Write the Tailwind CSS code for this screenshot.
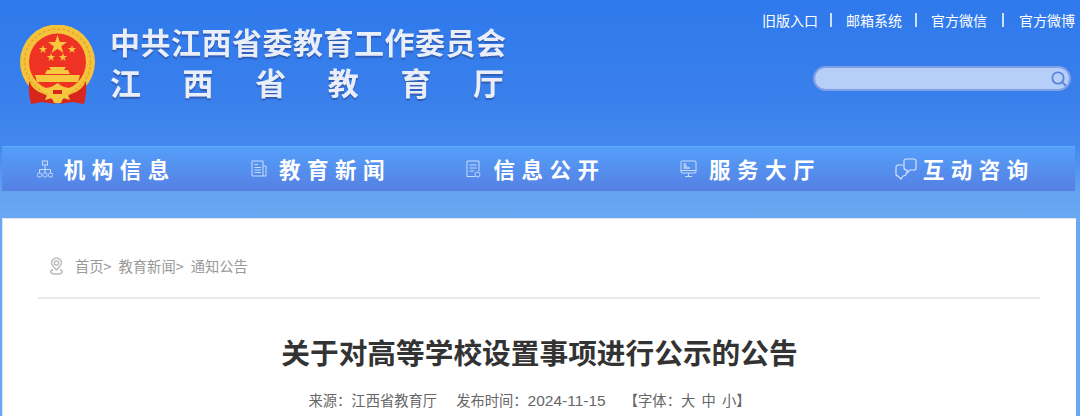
<!DOCTYPE html>
<html lang="zh-CN">
<head>
<meta charset="utf-8">
<script src="https://cdn.jsdelivr.net/npm/@tailwindcss/browser@4"></script>
</head>
<body class="m-0 h-[416px] w-[1080px] overflow-hidden bg-[#6aa8f2] font-['Noto_Sans_CJK_SC','Liberation_Sans',sans-serif]">
<div class="flex h-[416px] flex-col bg-[linear-gradient(180deg,#2e79ec_0px,#3a80ec_100px,#4388ee_146px,#62a2ef_191px,#6aa8f2_218px)]">
  <header class="flex h-[146px] shrink-0 justify-between">
    <div class="flex pl-[20px] pt-[25px]">
      <svg class="blur-[0.5px]" width="75" height="80" viewBox="0 0 75 80">
        <circle cx="37.5" cy="37" r="37.5" fill="#f5c33b"/>
        <circle cx="37.5" cy="37" r="33" fill="none" stroke="#e6a62a" stroke-width="1.5" stroke-dasharray="3 2"/>
        <circle cx="37.5" cy="37" r="28.5" fill="#ee3324"/>
        <polygon fill="#f6c83e" points="37.5,10 39.8,17 47,17 41.2,21.2 43.4,28 37.5,23.8 31.6,28 33.8,21.2 28,17 35.2,17"/>
        <polygon fill="#f6c83e" points="23,20 24,23 27.2,23 24.6,24.9 25.6,28 23,26.1 20.4,28 21.4,24.9 18.8,23 22,23"/>
        <polygon fill="#f6c83e" points="52,20 53,23 56.2,23 53.6,24.9 54.6,28 52,26.1 49.4,28 50.4,24.9 47.8,23 51,23"/>
        <polygon fill="#f6c83e" points="31,28 32,31 35.2,31 32.6,32.9 33.6,36 31,34.1 28.4,36 29.4,32.9 26.8,31 30,31"/>
        <polygon fill="#f6c83e" points="43,28 44,31 47.2,31 44.6,32.9 45.6,36 43,34.1 40.4,36 41.4,32.9 38.8,31 42,31"/>
        <path d="M29 42 H46 L44 45 H48 L50 49 H25 L27 45 H31 Z" fill="#f6c83e"/>
        <path d="M15 50 H60 L58 57 H17 Z" fill="#f6c83e"/>
        <path d="M9 56 Q13 66 24 69 L31 73 L36 79 L22 77 L11 79 Q8 68 9 56 Z M66 56 Q62 66 51 69 L44 73 L39 79 L53 77 L64 79 Q67 68 66 56 Z" fill="#d8261c"/>
        <path d="M21 62 Q29 65 37.5 58 Q46 65 54 62 Q53 69 47 68 L50 75 L43 73 L41 78 H34 L32 73 L25 75 L28 68 Q22 69 21 62 Z" fill="#f6c83e"/>
        <path d="M33 65 H42 V69 H33 Z" fill="#d8261c"/>
      </svg>
      <div class="ml-[15px] flex w-[396px] flex-col font-bold text-[#e9eef9] blur-[0.4px] [text-shadow:0_2px_1px_rgba(40,60,130,0.5)]">
        <div class="mt-[-3px] flex h-[37px] items-center justify-between text-[30px] leading-none">
          <span>中</span><span>共</span><span>江</span><span>西</span><span>省</span><span>委</span><span>教</span><span>育</span><span>工</span><span>作</span><span>委</span><span>员</span><span>会</span>
        </div>
        <div class="mt-[2px] flex h-[40px] items-center justify-between pr-[2px] text-[31px] leading-none">
          <span>江</span><span>西</span><span>省</span><span>教</span><span>育</span><span>厅</span>
        </div>
      </div>
    </div>
    <div class="flex flex-col items-end">
      <nav class="flex h-[39px] items-center text-[14px] leading-none text-white">
        <a>旧版入口</a><span class="ml-[12px] mr-[14px] h-[14px] w-[2px] bg-[#cfe0fb]"></span>
        <a>邮箱系统</a><span class="ml-[13px] mr-[14px] h-[14px] w-[2px] bg-[#cfe0fb]"></span>
        <a>官方微信</a><span class="mx-[15px] h-[14px] w-[2px] bg-[#cfe0fb]"></span>
        <a class="pr-[5px]">官方微博</a>
      </nav>
      <div class="mr-[9px] mt-[27px] flex h-[25px] w-[258px] items-center justify-end rounded-full border-2 border-[#7f9fe6] bg-[#b6cff8] pr-[1px]">
        <svg width="18" height="18" viewBox="0 0 18 18" fill="none" stroke="#5c82e0" stroke-width="1.8"><circle cx="8" cy="8" r="5.7"/><path d="M12.2 12.2 L16 16"/></svg>
      </div>
    </div>
  </header>

  <nav class="ml-[2px] mr-[5px] grid h-[45px] shrink-0 grid-cols-5 border-t border-[#63aafb] bg-[linear-gradient(180deg,#559ffa,#5580e3)] pb-[1px] text-[21.5px] font-bold leading-none text-white">
    <a class="flex items-center justify-center pr-[6px]">
      <svg class="mr-[11px]" width="16" height="18" viewBox="0 0 16 18" fill="none" stroke="#c9dcfa" stroke-width="1"><rect x="5.5" y="1" width="5" height="4"/><path d="M8 5 V9 M2.5 13 V9.5 H13.5 V13 M8 9.5 V13"/><rect x="0.5" y="13" width="4" height="4" rx="1.5"/><rect x="6" y="13" width="4" height="4" rx="1.5"/><rect x="11.5" y="13" width="4" height="4" rx="1.5"/></svg>
      <span class="tracking-[6.5px]">机构信息</span>
    </a>
    <a class="flex items-center justify-center pr-[6px]">
      <svg class="mr-[12px]" width="16" height="17" viewBox="0 0 16 17" fill="none" stroke="#c9dcfa" stroke-width="1"><path d="M1 1 H12 V16 H1 Z M12 6 H15 V16 H12"/><path d="M3.5 4.5 H7 M3.5 7.5 H10 M3.5 10 H10 M3.5 12.5 H10"/></svg>
      <span class="tracking-[6.5px]">教育新闻</span>
    </a>
    <a class="flex items-center justify-center pr-[5px]">
      <svg class="mr-[12px]" width="15" height="18" viewBox="0 0 15 18" fill="none" stroke="#c9dcfa" stroke-width="1"><path d="M9 16.5 H1 V1 H13 V11"/><path d="M3.5 5 H10.5 M3.5 8 H10.5 M3.5 11 H8"/><circle cx="11.5" cy="14.5" r="2.5"/></svg>
      <span class="tracking-[6.5px]">信息公开</span>
    </a>
    <a class="flex items-center justify-center pr-[5px]">
      <svg class="mr-[12px]" width="17" height="18" viewBox="0 0 17 18" fill="none" stroke="#c9dcfa" stroke-width="1"><rect x="1" y="1" width="15" height="12" rx="1"/><path d="M1 10.5 H16 M8.5 13 V16.5 M5 16.5 H12"/><path d="M3.5 4 H6 M3.5 6 H7 M3.5 8 H10" stroke-width="1.4"/></svg>
      <span class="tracking-[6.5px]">服务大厅</span>
    </a>
    <a class="flex items-center justify-center pr-[6px]">
      <svg class="mr-[6px]" width="22" height="22" viewBox="0 0 22 22" fill="none" stroke="#d5e3fb" stroke-width="1.2"><path d="M9 2.5 Q9 1 11 1 H19 Q21 1 21 3 V10 Q21 12 19 12 H15 L12 15 V12 Q9 12 9 10 Z"/><path d="M8 7 H3.5 Q1 7 1 9.5 V16 Q1 18 3 18 L6 21 L8 18 Q11 18 11.5 15"/></svg>
      <span class="tracking-[6.5px]">互动咨询</span>
    </a>
  </nav>

  <div class="h-[27px] shrink-0"></div>

  <main class="ml-[2px] mr-[4px] flex-1 border-l border-t border-[#dfe6f0] bg-white">
    <div class="ml-[35px] mr-[36px] flex h-[80px] items-center border-b-2 border-[#e8e8e8] pb-[2px] pl-[11px] pt-[18px] text-[14.3px] leading-none text-[#999999]">
      <svg width="15" height="18" viewBox="0 0 15 18" fill="none" stroke="#bdbdbd" stroke-width="1.5"><circle cx="7.5" cy="6" r="2.2"/><path d="M7.5 13 C4 9.5 2.5 8 2.5 6 A5 5 0 0 1 12.5 6 C12.5 8 11 9.5 7.5 13 Z"/><path d="M4 12.5 Q1 14 2 15.5 Q3 17 7.5 17 Q12 17 13 15.5 Q14 14 11 12.5"/></svg>
      <span class="ml-[11px]">首页&gt;</span><span class="ml-[7px]">教育新闻&gt;</span><span class="ml-[7px]">通知公告</span>
    </div>
    <h1 class="mt-[35px] text-center text-[28.7px] font-bold leading-[36px] text-[#333333]">关于对高等学校设置事项进行公示的公告</h1>
    <div class="mt-[20px] flex justify-center pr-[20px] text-[14.3px] leading-[20px] text-[#666666]">
      <span>来源：江西省教育厅</span>
      <span class="ml-[19px]">发布时间：<span class="font-['Liberation_Sans'] text-[15.5px]">2024-11-15</span></span>
      <span class="ml-[18px] [word-spacing:3px]">【字体：大 中 小】</span>
    </div>
  </main>
</div>
</body>
</html>
